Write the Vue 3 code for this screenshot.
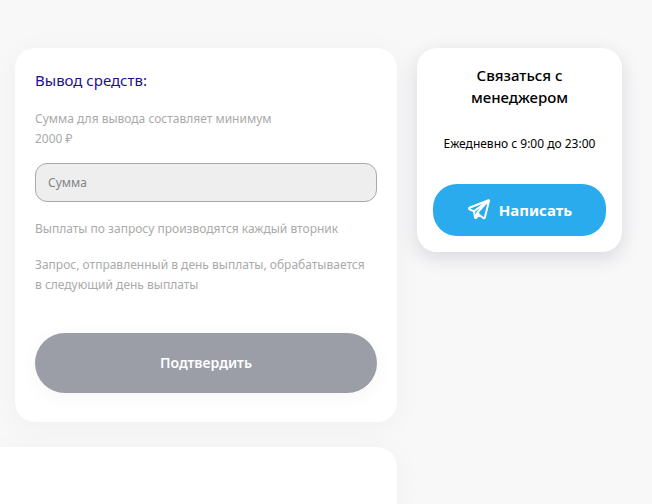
<script setup>
import { ref } from 'vue'

const amount = ref('')
</script>

<template>
  <main class="page">
    <div class="content">
      <form class="card withdraw" @submit.prevent>
        <h2 class="title">Вывод средств:</h2>
        <label class="note minimum" for="amount">Сумма для вывода составляет минимум 2000 ₽</label>
        <input id="amount" v-model="amount" class="amount" type="text" placeholder="Сумма" disabled />
        <p class="note">Выплаты по запросу производятся каждый вторник</p>
        <p class="note">Запрос, отправленный в день выплаты, обрабатывается в&nbsp;следующий день выплаты</p>
        <button class="submit" type="submit" disabled>Подтвердить</button>
      </form>
      <section class="history"></section>
    </div>
    <aside class="card contact">
      <h3 class="contact-title">Связаться с менеджером</h3>
      <p class="hours">Ежедневно с 9:00 до 23:00</p>
      <a class="write" href="#">
        <svg class="plane" viewBox="0 0 24 24" aria-hidden="true">
          <path d="M21.6 2.2 2.4 9.8Q1.6 10.5 2.5 11.3L7 13.3 8.1 19.6Q8.6 20.3 9.2 19.7L12 16.7 16.7 20.3Q17.5 20.5 17.8 19.7L22 2.8Q22.1 2.1 21.6 2.2ZM7 13.3 21.4 2.6 10.4 14.5 12 16.7M10.4 14.5 8.5 19.6" />
        </svg>
        <span>Написать</span>
      </a>
    </aside>
  </main>
</template>

<style>
body {
  background: #f8f8f8;
}
</style>

<style scoped>
.page {
  display: flex;
  align-items: flex-start;
  gap: 20px;
  min-height: 100vh;
  padding: 48px 30px 0 0;
  box-sizing: border-box;
  overflow: hidden;
  font-family: "Noto Sans", "Open Sans", sans-serif;
}

.content {
  display: flex;
  flex: 1;
  flex-direction: column;
  align-self: stretch;
  gap: 25px;
  min-width: 0;
}

.card {
  box-sizing: border-box;
  border-radius: 20px;
  background: #fff;
}

.withdraw {
  display: flex;
  flex-direction: column;
  margin-left: 15px;
  padding: 20px 20px 29px;
  box-shadow: 0 4px 30px rgba(0, 0, 0, 0.04);
}

.title {
  margin: 0 0 17px;
  color: #1c0d92;
  font-size: 15px;
  font-weight: 400;
  line-height: 24px;
}

.note {
  margin: 0 0 16px;
  color: #aaa;
  font-size: 12px;
  line-height: 20px;
}

.minimum {
  max-width: 260px;
  margin-bottom: 14px;
}

.amount {
  box-sizing: border-box;
  width: 100%;
  height: 39px;
  margin: 0 0 17px;
  padding: 0 12px;
  border: 1px solid #a8a9ae;
  border-radius: 12px;
  background: #eee;
  color: #757575;
  font: 400 12px/20px "Noto Sans", sans-serif;
}

.amount::placeholder {
  color: #858585;
  opacity: 1;
}

.submit {
  height: 60px;
  margin: 22px 0 0;
  border: 0;
  border-radius: 30px;
  background: #9b9da7;
  box-shadow: 0 4px 20px rgba(0, 0, 0, 0.04);
  color: #fff;
  font: 600 14px/20px "Noto Sans", sans-serif;
}

.history {
  flex: 1;
  min-height: 57px;
  border-radius: 0 20px 0 0;
  background: #fff;
  box-shadow: 0 4px 30px rgba(0, 0, 0, 0.04);
}

.contact {
  width: 205px;
  padding: 16px;
  box-shadow: 0 6px 20px rgba(30, 20, 80, 0.14);
  text-align: center;
}

.contact-title {
  margin: 0 0 24px;
  font-size: 15px;
  font-weight: 500;
  line-height: 22px;
}

.hours {
  margin: 0 0 28px;
  color: #000;
  font-size: 12px;
  line-height: 24px;
  white-space: nowrap;
}

.write {
  display: flex;
  align-items: center;
  justify-content: center;
  gap: 8px;
  height: 52px;
  border-radius: 24px;
  background: #2aabee;
  color: #fff;
  font-size: 15px;
  font-weight: 700;
  text-decoration: none;
}

.plane {
  width: 24px;
  height: 24px;
  fill: none;
  stroke: currentColor;
  stroke-linejoin: round;
  stroke-linecap: round;
  stroke-width: 2;
}
</style>
